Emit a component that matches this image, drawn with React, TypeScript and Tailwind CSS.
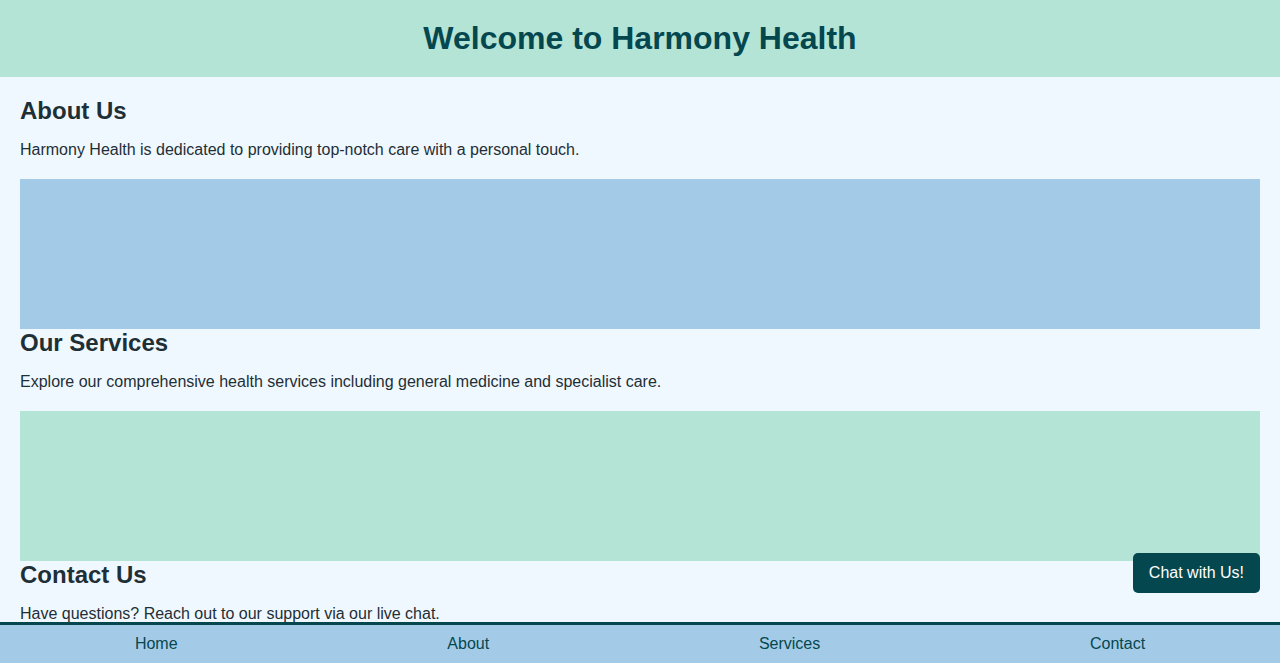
import React from 'react';

const sections = [
  {
    title: 'About Us',
    text: 'Harmony Health is dedicated to providing top-notch care with a personal touch.',
    box: 'bg-[#a3cbe7]',
  },
  {
    title: 'Our Services',
    text: 'Explore our comprehensive health services including general medicine and specialist care.',
    box: 'bg-[#b4e4d6]',
  },
  {
    title: 'Contact Us',
    text: 'Have questions? Reach out to our support via our live chat.',
    box: null,
  },
];

const navLinks = ['Home', 'About', 'Services', 'Contact'];

export default function App() {
  return (
    <div className="min-h-screen bg-[#f0f8ff] font-['Liberation_Sans',Arial,sans-serif] text-[#1e2f36]">
      {/* Header */}
      <header className="bg-[#b4e4d6] py-5 text-center">
        <h1 className="text-[32px] leading-[37px] font-bold text-[#05474f]">Welcome to Harmony Health</h1>
      </header>

      {/* Content */}
      <main className="px-5 pt-5 pb-16">
        {sections.map((s) => (
          <section key={s.title}>
            <h2 className="text-2xl leading-[28px] font-bold">{s.title}</h2>
            <p className="mt-4 text-base leading-[18px]">{s.text}</p>
            {s.box && <div className={`mt-5 h-[150px] ${s.box}`} />}
          </section>
        ))}
      </main>

      {/* Chat button */}
      <button className="fixed right-5 bottom-[70px] h-10 px-4 rounded-[5px] bg-[#05474f] text-white text-base leading-6">
        Chat with Us!
      </button>

      {/* Footer nav */}
      <nav className="fixed bottom-0 left-0 right-0 h-[41px] bg-[#a3cbe7] border-t-[3px] border-[#05474f] flex items-center justify-around">
        {navLinks.map((l) => (
          <a key={l} href="#" className="text-base text-[#05474f]">
            {l}
          </a>
        ))}
      </nav>
    </div>
  );
}
